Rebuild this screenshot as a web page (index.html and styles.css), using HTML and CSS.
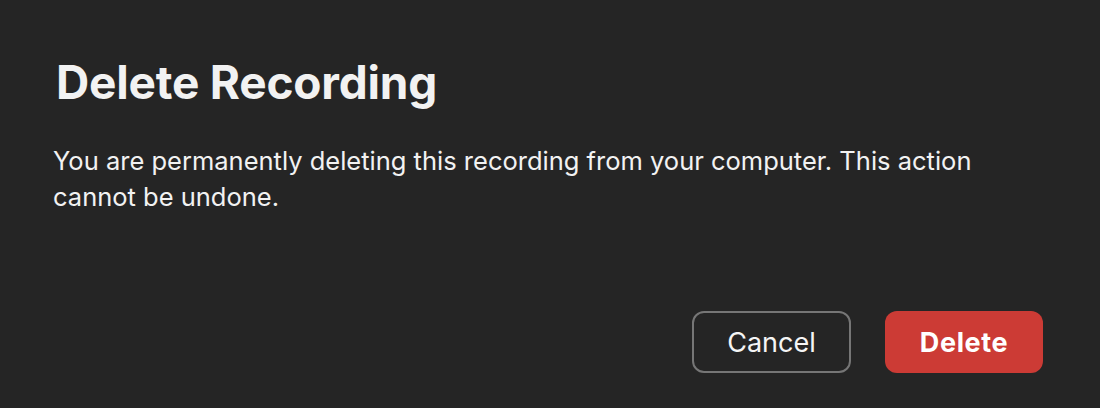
FILE: index.html
```html
<!DOCTYPE html>
<html>
<head>
<meta charset="utf-8">
<link rel="stylesheet" href="styles.css">
</head>
<body>
<div class="dialog">
  <h1 class="title">Delete Recording</h1>
  <p class="message">You are permanently deleting this recording from your computer. This action cannot be undone.</p>
  <div class="actions">
    <button class="btn btn-cancel">Cancel</button>
    <button class="btn btn-delete">Delete</button>
  </div>
</div>
</body>
</html>
```
FILE: styles.css
```css
html, body {
  margin: 0;
  padding: 0;
  background: #252525;
}
.dialog {
  width: 1100px;
  height: 408px;
  box-sizing: border-box;
  padding: 52px 57px 0 53px;
  font-family: Inter, "Noto Sans", sans-serif;
  color: #f2f2f2;
  display: flex;
  flex-direction: column;
}
.title {
  margin: 0 0 0 3px;
  font-size: 46px;
  font-weight: 700;
  line-height: 60px;
  letter-spacing: -0.2px;
}
.message {
  margin: 31px 0 0 0;
  font-size: 25.5px;
  line-height: 36px;
  max-width: 960px;
}
.actions {
  margin-top: 96px;
  display: flex;
  justify-content: flex-end;
  gap: 34px;
}
.btn {
  font-family: Inter, "Noto Sans", sans-serif;
  font-size: 27px;
  height: 62px;
  width: 158px;
  border-radius: 12px;
  color: #f5f5f5;
  cursor: pointer;
  padding: 0;
}
.btn-cancel {
  width: 159px;
  background: transparent;
  border: 2px solid #767676;
  font-weight: 400;
}
.btn-delete {
  background: #cc3b35;
  border: none;
  font-weight: 700;
  letter-spacing: 0.6px;
  color: #fff;
}
```
